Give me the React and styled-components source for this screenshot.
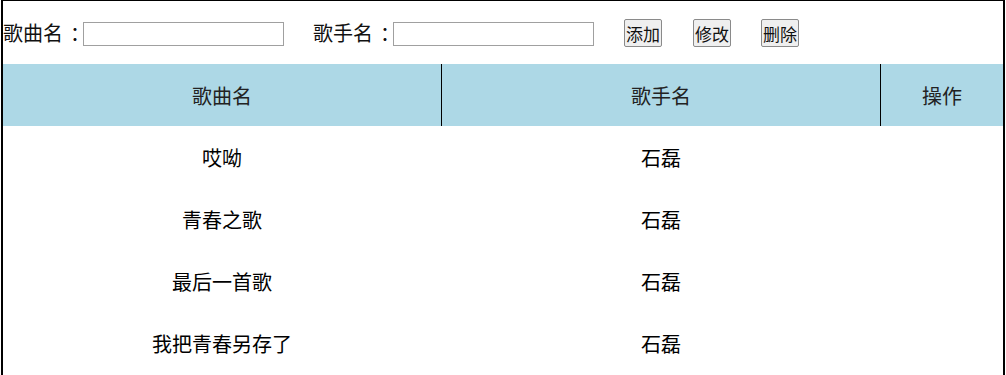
import React from 'react'
import styled, { createGlobalStyle } from 'styled-components'

const GlobalStyle = createGlobalStyle`
  body {
    margin: 0;
    background: #fff;
    font-family: "Microsoft YaHei", "Noto Sans CJK SC", sans-serif;
  }
`

const Page = styled.div`
  box-sizing: border-box;
  margin-left: 1px;
  width: 1004px;
  height: 375px;
  border: 2px solid #000;
  border-top-width: 1px;
  border-bottom: none;
  overflow: hidden;
`

const Toolbar = styled.div`
  display: flex;
  align-items: center;
  height: 63px;
  font-size: 20px;
  color: #111;
`

const Field = styled.label`
  display: flex;
  align-items: center;
  margin-right: ${p => p.$gap || 0}px;
`

// full-width colon drawn centred in its box, like the reference font
const Colon = styled.span`
  padding-left: 7px;
  margin-right: -7px;
`

const TextInput = styled.input`
  box-sizing: border-box;
  width: 201px;
  height: 24px;
  border: 1px solid #a0a0a0;
  padding: 0 2px;
  margin-top: 2px;
`

const Btn = styled.button`
  box-sizing: border-box;
  height: 28px;
  padding: 0 1px;
  margin-right: ${p => p.$gap || 0}px;
  margin-top: 1px;
  font-family: inherit;
  font-size: 17px;
  color: #111;
  background: #efefef;
  border: 1px solid #8a8a8a;
  border-radius: 2px;
`

const Table = styled.div`
  display: grid;
  grid-template-columns: 438px 1px 438px 1px 1fr;
`

const HeadCell = styled.div`
  height: 62px;
  display: flex;
  align-items: center;
  justify-content: center;
  background: #add8e6;
  font-size: 20px;
  color: #222;
`

const Divider = styled.div`
  background: ${p => (p.$head ? '#000' : 'transparent')};
`

const Cell = styled.div`
  height: 62px;
  display: flex;
  align-items: center;
  justify-content: center;
  font-size: 20px;
  color: #000;
`

const songs = [
  { name: '哎呦', singer: '石磊' },
  { name: '青春之歌', singer: '石磊' },
  { name: '最后一首歌', singer: '石磊' },
  { name: '我把青春另存了', singer: '石磊' },
]

export default function App() {
  return (
    <>
      <GlobalStyle />
      <Page>
        <Toolbar>
          <Field $gap={29}>
            歌曲名<Colon>：</Colon>
            <TextInput type="text" />
          </Field>
          <Field $gap={30}>
            歌手名<Colon>：</Colon>
            <TextInput type="text" />
          </Field>
          <Btn $gap={31}>添加</Btn>
          <Btn $gap={30}>修改</Btn>
          <Btn>删除</Btn>
        </Toolbar>
        <Table>
          <HeadCell>歌曲名</HeadCell>
          <Divider $head />
          <HeadCell>歌手名</HeadCell>
          <Divider $head />
          <HeadCell>操作</HeadCell>
          {songs.map(s => (
            <React.Fragment key={s.name}>
              <Cell>{s.name}</Cell>
              <Divider />
              <Cell>{s.singer}</Cell>
              <Divider />
              <Cell />
            </React.Fragment>
          ))}
        </Table>
      </Page>
    </>
  )
}
